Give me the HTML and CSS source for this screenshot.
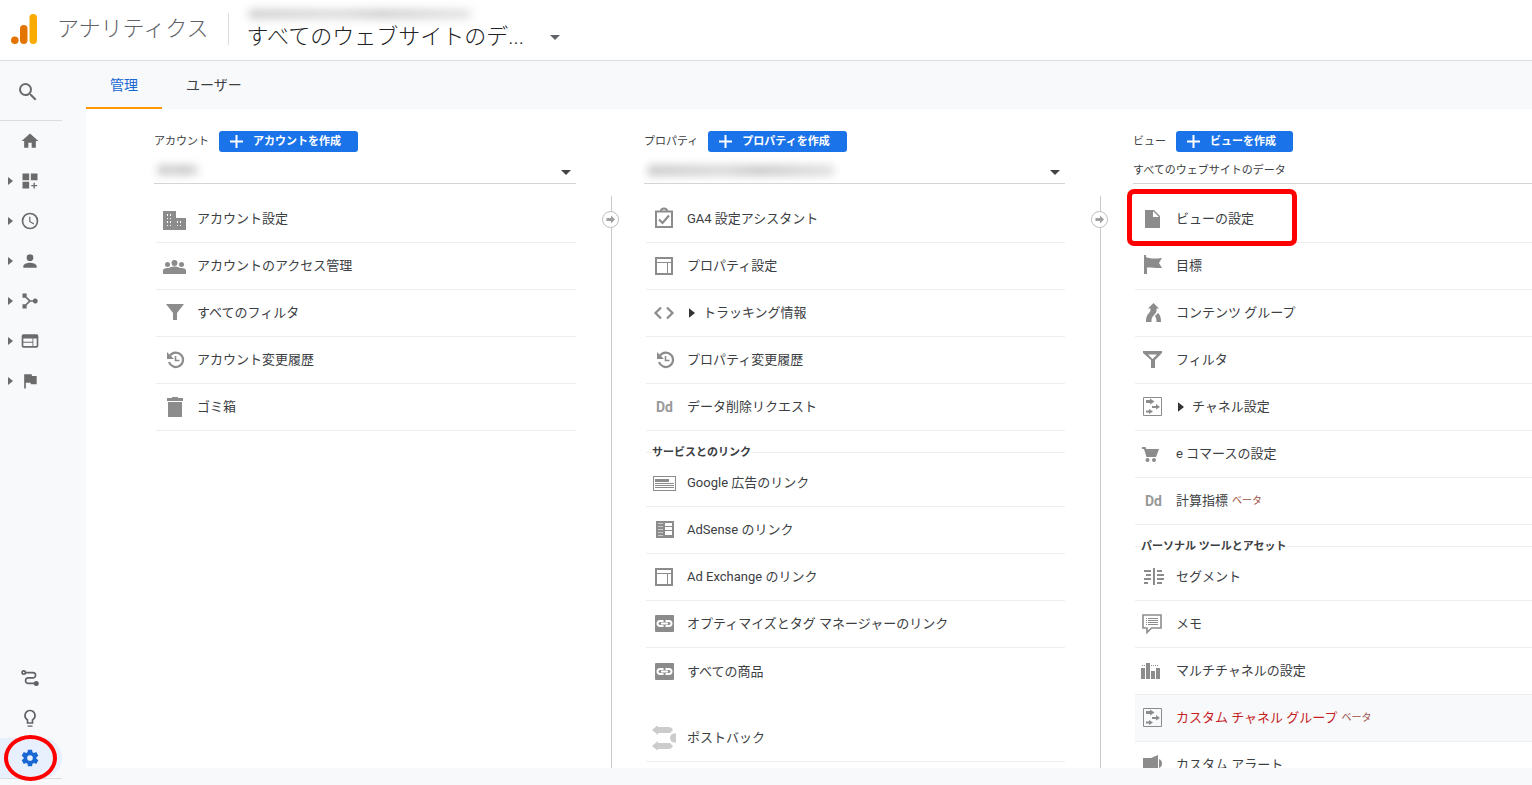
FILE: index.html
```html
<!DOCTYPE html>
<html lang="ja">
<head>
<meta charset="utf-8">
<title>アナリティクス</title>
<link rel="stylesheet" href="styles.css">
</head>
<body>
<svg class="sprite" aria-hidden="true">
  <symbol id="caret-r" viewBox="0 0 5 8"><path d="M0 0l5 4-5 4z"/></symbol>
  <symbol id="caret-d" viewBox="0 0 10 5"><path d="M0 0h10L5 5z"/></symbol>
  <symbol id="plus" viewBox="0 0 13 13"><path d="M5.500 0h2v5.500h5.500v2H7.500V13h-2V7.500H0v-2h5.500z"/></symbol>
  <symbol id="search" viewBox="0 0 24 24"><path d="M15.500 14h-.79l-.28-.27A6.470 6.470 0 0 0 16 9.500 6.500 6.500 0 1 0 9.500 16c1.610 0 3.090-.59 4.230-1.570l.27.28v.79l5 4.990L20.490 19zm-6 0a4.500 4.500 0 1 1 0-9 4.500 4.500 0 0 1 0 9z"/></symbol>
  <symbol id="home" viewBox="0 0 24 24"><path d="M10 20v-6h4v6h5v-8h3L12 3 2 12h3v8z"/></symbol>
  <symbol id="dash" viewBox="0 0 24 24"><path d="M3 3h8v8H3zM13 3h8v8h-8zM3 13h8v8H3zM16.200 14h1.600v2.700h2.700v1.600h-2.700V21h-1.600v-2.700h-2.700v-1.600h2.700z"/></symbol>
  <symbol id="clock" viewBox="0 0 24 24"><path d="M12 2a10 10 0 1 0 0 20 10 10 0 0 0 0-20zm0 18a8 8 0 1 1 0-16 8 8 0 0 1 0 16zm.5-13H11v6l5.250 3.150.75-1.230-4.500-2.670z"/></symbol>
  <symbol id="person" viewBox="0 0 24 24"><path d="M12 12a4 4 0 1 0 0-8 4 4 0 0 0 0 8zm0 2c-2.670 0-8 1.340-8 4v2h16v-2c0-2.660-5.330-4-8-4z"/></symbol>
  <symbol id="flow" viewBox="0 0 24 24"><path d="M3 3h5v4l4.500 4h3a3 3 0 1 1 0 2h-3L8 17v4H3v-5h3.500l4-4-4-4H3z"/></symbol>
  <symbol id="web" viewBox="0 0 24 24"><path d="M20 4H4a2 2 0 0 0-2 2v12a2 2 0 0 0 2 2h16a2 2 0 0 0 2-2V6a2 2 0 0 0-2-2zm-5 14H4v-4h11zm0-5H4V9h11zm5 5h-4V9h4z"/></symbol>
  <symbol id="flag" viewBox="0 0 24 24"><path d="M14.400 6 14 4H5v17h2v-7h5.600l.4 2h7V6z"/></symbol>
  <symbol id="route" viewBox="0 0 24 24"><g fill="none" stroke="currentColor" stroke-width="2"><circle cx="4.500" cy="5.500" r="2"/><path d="M6.500 5.500h9a3.200 3.200 0 0 1 0 6.400H10a3.200 3.200 0 0 0 0 6.600h8"/></g><circle cx="19.500" cy="18.500" r="3"/></symbol>
  <symbol id="bulb" viewBox="0 0 24 24"><path d="M9 21h6v1.500H9zM12 2a7 7 0 0 0-4 12.740V19h8v-4.260A7 7 0 0 0 12 2zm2.850 11.100-.85.6V17h-4v-3.300l-.85-.6a5 5 0 1 1 5.700 0z"/></symbol>
  <symbol id="gear" viewBox="0 0 24 24"><path fill-rule="evenodd" d="M9.500 2h5l.5 3 1.800 1 2.700-1.100 2.500 4.300-2.300 1.900v1.800l2.300 1.900-2.500 4.300-2.700-1.100-1.800 1-.5 3h-5L9 19l-1.800-1-2.700 1.100L2 14.800l2.300-1.900v-1.800L2 9.200l2.500-4.300L7.200 6 9 5zM12 8.600a3.400 3.400 0 1 0 0 6.800 3.400 3.400 0 0 0 0-6.800z"/></symbol>

  <symbol id="building" viewBox="0 0 24 24"><path fill-rule="evenodd" d="M1 4h13v7h10v12H1zM5 7v2h1V7zm3 0v2h1V7zM5 11v1h1v-1zm3 0v1h1v-1zM5 14v2h1v-2zm3 0v2h1v-2zM5 18v1h1v-1zm3 0v1h1v-1zM15 14v2h1v-2zm3 0v2h1v-2zM15 18v1h1v-1zm3 0v1h1v-1z"/></symbol>
  <symbol id="people" viewBox="0 0 24 24"><circle cx="12.500" cy="9" r="3"/><circle cx="5.500" cy="10.500" r="2.500"/><circle cx="19.500" cy="10.500" r="2.500"/><path d="M1 20v-3.500c0-2 3-2.500 6-2.500 1.500-1 3.500-1.500 5.500-1.500s4 .5 5.500 1.500c3 0 6 .5 6 2.500V20z"/></symbol>
  <symbol id="funnel" viewBox="0 0 24 24"><path d="M4 3h18l-7 9v7h-4v-7z"/></symbol>
  <symbol id="history" viewBox="0 0 24 24"><g fill="none" stroke="currentColor" stroke-width="2.200"><path d="M8 7.600A7.200 7.200 0 1 1 7 14"/><path d="M13.500 8v4.500h4" stroke-width="1.600"/></g><path d="M5 4v7h7L9.500 8.500z"/></symbol>
  <symbol id="trash" viewBox="0 0 24 24"><path d="M5 3h5V2h6v1h5v3H5zM6 7h14v15H6z"/></symbol>
  <symbol id="assign" viewBox="0 0 24 24"><g fill="none" stroke="currentColor" stroke-width="2"><path d="M4 4.500h16V20H4z"/><path d="M7 12.500l3.500 3.500L17 8.500" stroke-width="2.200"/><path d="M9 4a3 2.500 0 0 1 6 0"/></g></symbol>
  <symbol id="layout" viewBox="0 0 24 24"><path fill-rule="evenodd" d="M3 3h18v18H3zm2 2v3h14V5zm0 4v10h10V9zm11 0v10h3V9z"/></symbol>
  <symbol id="code" viewBox="0 0 24 24"><path d="M9 6.500 3.500 12 9 17.500M15 6.500l5.500 5.500-5.500 5.500" fill="none" stroke="currentColor" stroke-width="2.200"/></symbol>
  <symbol id="adlink" viewBox="0 0 24 24"><path fill-rule="evenodd" d="M1 5h23v15H1zm1 1v13h21V6z"/><path d="M3 8h14v3H3zM3 12h19v1H3zM3 14h19v1H3zM3 16h19v1H3z"/></symbol>
  <symbol id="adsense" viewBox="0 0 24 24"><path fill-rule="evenodd" d="M4 3h18v17H4zm9 2v3h7V5zm0 4v3h7V9zm0 4v4h7v-4z"/><path d="M6 5h5v1H6zM6 8h5v1H6zM6 11h5v1H6zM6 14h5v1H6zM6 17h5v1H6z" fill="#ccc"/></symbol>
  <symbol id="link" viewBox="0 0 24 24"><rect x="3" y="3" width="19" height="17" rx="1"/><g fill="none" stroke="#fff" stroke-width="2"><path d="M11.500 9H8a2.500 2.500 0 0 0 0 5h3.500M13.500 9H17a2.500 2.500 0 0 1 0 5h-3.500M9 11.500h7"/></g></symbol>
  <symbol id="postback" viewBox="0 0 24 24"><g fill="#ccc"><path d="M0 4l6-5v2h10c3 0 4 1 5 3l-3 3H6v2zM0 20l6 5v-2h10c3 0 4-1 5-3l-3-3H6v-2z"/><path d="M25 7.500h-2.500a4.500 4.500 0 0 0 0 9H25z"/></g></symbol>
  <symbol id="doc" viewBox="0 0 24 24"><path fill-rule="evenodd" d="M4 3h9l6 6v12H4zm8 1v6h6z"/></symbol>
  <symbol id="pennant" viewBox="0 0 24 24"><path d="M3 1h2v2c3 1.500 7 2 16 1l-3 5 3 5c-6 .5-11-1-15-.5V20H3z"/></symbol>
  <symbol id="merge" viewBox="0 0 24 24"><path d="M12.500 2 18 7.500h-2.500c.5 2.500-.5 4.500-2 6-2.500 2.500-3 3.500-3 7.500H5c0-5 1-7 3-9 1.500-1.500 1.500-2.500 1.500-4.500H7zM14 15l3-3c2.500 2 3 5 3 9h-4.500c0-3-.5-4.500-1.500-6z"/></symbol>
  <symbol id="filter" viewBox="0 0 24 24"><path fill-rule="evenodd" d="M2 3h19v2l-7 7v8h-4v-8L2 5zm5 3.500 4.500 4.500L16 6.500z"/></symbol>
  <symbol id="channel" viewBox="0 0 24 24"><path d="M2.500 2.500h18v18h-18z" fill="none" stroke="currentColor"/><path d="M5 5h4V3.500l4.500 3L9 9.500V8H5zM11 11h4V9l4 3-4 2.500V13h-4zM5 15.500h3V14l4 2.500L8 19v-1.500H5z"/></symbol>
  <symbol id="cart" viewBox="0 0 24 24"><path d="M1 5h3.500l.8 2H18l-3 8H5.500L3 7H1z"/><circle cx="6.500" cy="18" r="2"/><circle cx="13" cy="18" r="2"/></symbol>
  <symbol id="segment" viewBox="0 0 24 24"><path d="M12 3h2v17h-2zM3 5h7v2H3zM5 9h5v2H5zM3 13h7v2H3zM3 17h4v2H3zM16 5h5v2h-5zM16 9h7v2h-7zM16 13h7v2h-7zM16 17h5v2h-5z"/></symbol>
  <symbol id="memo" viewBox="0 0 24 24"><path d="M2 3h18v13h-9.500L6 20.500V16H2z" fill="none" stroke="currentColor" stroke-width="1.600"/><path d="M5 6h1v1H5zM7 6h10v1H7zM5 8h1v1H5zM7 8h10v1H7zM5 10h1v1H5zM7 10h10v1H7zM5 12h1v1H5zM7 12h10v1H7z"/></symbol>
  <symbol id="bars" viewBox="0 0 24 24"><path d="M0 9h4v11H0zM5 4h4v16H5zM10 12h4v8h-4zM15 9h4v11h-4zM1 6h1v1H1zM3 6h1v1H3zM10 6h1v1h-1zM12 6h1v1h-1zM14 6h1v1h-1zM16 6h1v1h-1z"/></symbol>
  <symbol id="horn" viewBox="0 0 24 24"><path d="M2 5h8l7-3v18l-7-4v4H5v-4H2zM18 6c4 1 4 8 0 9z"/></symbol>
</svg>

<header class="topbar">
  <svg class="logo" viewBox="0 0 27 30" aria-hidden="true"><rect x="18.500" width="7.500" height="30" rx="3.700" fill="#f9ab00"/><rect x="9" y="11" width="7.500" height="19" rx="3.700" fill="#e37400"/><circle cx="3.800" cy="26.200" r="3.800" fill="#e37400"/></svg>
  <h1 class="product">アナリティクス</h1>
  <button class="view-picker" aria-label="ビューを切り替え">
    <span class="smudge smudge-top"></span>
    <span class="view-name">すべてのウェブサイトのデ...</span>
    <svg class="caret-down"><use href="#caret-d"/></svg>
  </button>
</header>

<div class="shell">
  <nav class="rail" aria-label="メイン">
    <button class="rail-search" aria-label="検索"><svg class="ico-lg"><use href="#search"/></svg></button>
    <a class="rail-item" href="#" aria-label="ホーム"><span class="tri"></span><svg class="ico"><use href="#home"/></svg></a>
    <a class="rail-item" href="#" aria-label="カスタム"><svg class="tri"><use href="#caret-r"/></svg><svg class="ico"><use href="#dash"/></svg></a>
    <a class="rail-item" href="#" aria-label="リアルタイム"><svg class="tri"><use href="#caret-r"/></svg><svg class="ico"><use href="#clock"/></svg></a>
    <a class="rail-item" href="#" aria-label="ユーザー"><svg class="tri"><use href="#caret-r"/></svg><svg class="ico"><use href="#person"/></svg></a>
    <a class="rail-item" href="#" aria-label="集客"><svg class="tri"><use href="#caret-r"/></svg><svg class="ico"><use href="#flow"/></svg></a>
    <a class="rail-item" href="#" aria-label="行動"><svg class="tri"><use href="#caret-r"/></svg><svg class="ico"><use href="#web"/></svg></a>
    <a class="rail-item" href="#" aria-label="コンバージョン"><svg class="tri"><use href="#caret-r"/></svg><svg class="ico"><use href="#flag"/></svg></a>
    <div class="rail-bottom">
      <a class="rail-item" href="#" aria-label="アトリビューション"><span class="tri"></span><svg class="ico"><use href="#route"/></svg></a>
      <a class="rail-item" href="#" aria-label="発見"><span class="tri"></span><svg class="ico"><use href="#bulb"/></svg></a>
      <a class="rail-item active" href="#" aria-label="管理"><span class="tri"></span><svg class="ico"><use href="#gear"/></svg><span class="ring"></span></a>
    </div>
  </nav>

  <main class="main">
    <div class="tabs" role="tablist">
      <button class="tab selected" role="tab" aria-selected="true">管理</button>
      <button class="tab" role="tab" aria-selected="false">ユーザー</button>
    </div>

    <div class="panel">
      <section class="col">
        <div class="col-head"><label for="account">アカウント</label><button class="create"><svg class="plus"><use href="#plus"/></svg>アカウントを作成</button></div>
        <div class="picker"><select id="account"><option></option></select><span class="smudge smudge-account"></span><svg class="caret-down"><use href="#caret-d"/></svg></div>
        <div class="list">
          <a class="row" href="#"><svg class="glyph"><use href="#building"/></svg>アカウント設定</a>
          <a class="row" href="#"><svg class="glyph"><use href="#people"/></svg>アカウントのアクセス管理</a>
          <a class="row" href="#"><svg class="glyph"><use href="#funnel"/></svg>すべてのフィルタ</a>
          <a class="row" href="#"><svg class="glyph"><use href="#history"/></svg>アカウント変更履歴</a>
          <a class="row" href="#"><svg class="glyph"><use href="#trash"/></svg>ゴミ箱</a>
        </div>
      </section>

      <div class="divider"><button class="move" aria-label="列を折りたたむ"><svg viewBox="0 0 17 17"><circle cx="8.500" cy="8.500" r="8" fill="#fff" stroke="#bdbdbd"/><path d="M4.500 7H9V4.500l4 4-4 4V10H4.500z" fill="#9e9e9e"/></svg></button></div>

      <section class="col">
        <div class="col-head"><label for="property">プロパティ</label><button class="create"><svg class="plus"><use href="#plus"/></svg>プロパティを作成</button></div>
        <div class="picker"><select id="property"><option></option></select><span class="smudge smudge-property"></span><svg class="caret-down"><use href="#caret-d"/></svg></div>
        <div class="list">
          <a class="row" href="#"><svg class="glyph"><use href="#assign"/></svg>GA4 設定アシスタント</a>
          <a class="row" href="#"><svg class="glyph"><use href="#layout"/></svg>プロパティ設定</a>
          <a class="row" href="#"><svg class="glyph"><use href="#code"/></svg><svg class="expand"><use href="#caret-r"/></svg>トラッキング情報</a>
          <a class="row" href="#"><svg class="glyph"><use href="#history"/></svg>プロパティ変更履歴</a>
          <a class="row" href="#"><span class="glyph dd">Dd</span>データ削除リクエスト</a>
          <h2 class="group"><span>サービスとのリンク</span></h2>
          <a class="row" href="#"><svg class="glyph"><use href="#adlink"/></svg>Google 広告のリンク</a>
          <a class="row" href="#"><svg class="glyph"><use href="#adsense"/></svg>AdSense のリンク</a>
          <a class="row" href="#"><svg class="glyph"><use href="#layout"/></svg>Ad Exchange のリンク</a>
          <a class="row" href="#"><svg class="glyph"><use href="#link"/></svg>オプティマイズとタグ マネージャーのリンク</a>
          <a class="row last" href="#"><svg class="glyph"><use href="#link"/></svg>すべての商品</a>
          <a class="row" href="#"><svg class="glyph"><use href="#postback"/></svg>ポストバック</a>
        </div>
      </section>

      <div class="divider"><button class="move" aria-label="列を折りたたむ"><svg viewBox="0 0 17 17"><circle cx="8.500" cy="8.500" r="8" fill="#fff" stroke="#bdbdbd"/><path d="M4.500 7H9V4.500l4 4-4 4V10H4.500z" fill="#9e9e9e"/></svg></button></div>

      <section class="col">
        <div class="col-head"><label for="view">ビュー</label><button class="create"><svg class="plus"><use href="#plus"/></svg>ビューを作成</button></div>
        <div class="picker"><select id="view"><option>すべてのウェブサイトのデータ</option></select></div>
        <div class="list">
          <a class="row" href="#"><svg class="glyph"><use href="#doc"/></svg>ビューの設定<span class="frame"></span></a>
          <a class="row" href="#"><svg class="glyph"><use href="#pennant"/></svg>目標</a>
          <a class="row" href="#"><svg class="glyph"><use href="#merge"/></svg>コンテンツ グループ</a>
          <a class="row" href="#"><svg class="glyph"><use href="#filter"/></svg>フィルタ</a>
          <a class="row" href="#"><svg class="glyph"><use href="#channel"/></svg><svg class="expand"><use href="#caret-r"/></svg>チャネル設定</a>
          <a class="row" href="#"><svg class="glyph"><use href="#cart"/></svg>e コマースの設定</a>
          <a class="row" href="#"><span class="glyph dd">Dd</span>計算指標<small class="beta">ベータ</small></a>
          <h2 class="group"><span>パーソナル ツールとアセット</span></h2>
          <a class="row" href="#"><svg class="glyph"><use href="#segment"/></svg>セグメント</a>
          <a class="row" href="#"><svg class="glyph"><use href="#memo"/></svg>メモ</a>
          <a class="row" href="#"><svg class="glyph"><use href="#bars"/></svg>マルチチャネルの設定</a>
          <a class="row hot" href="#"><svg class="glyph"><use href="#channel"/></svg>カスタム チャネル グループ<small class="beta">ベータ</small></a>
          <a class="row" href="#"><svg class="glyph"><use href="#horn"/></svg>カスタム アラート</a>
        </div>
      </section>
    </div>
  </main>
</div>
</body>
</html>
```

FILE: styles.css
```css
* { box-sizing: border-box; }
body {
  margin: 0;
  height: 100vh;
  display: flex;
  flex-direction: column;
  overflow: hidden;
  background: #f8f9fb;
  color: #3c4043;
  font: 13px/20px Roboto, "Noto Sans CJK JP", sans-serif;
}
button, select {
  font: inherit;
  color: inherit;
  background: none;
  border: 0;
  padding: 0;
  margin: 0;
}
a { color: inherit; text-decoration: none; }
svg { display: block; fill: currentColor; flex: none; overflow: visible; }
.sprite { position: absolute; width: 0; height: 0; overflow: hidden; }

.topbar {
  display: flex;
  align-items: center;
  flex: none;
  height: 61px;
  padding: 0 11px 2px;
  background: #fff;
  border-bottom: 1px solid #dadce0;
}
.logo { width: 27px; height: 30px; }
.product {
  margin: 0 19px 0 19px;
  font-size: 22px;
  line-height: 32px;
  font-weight: 300;
  color: #5f6368;
}
.view-picker {
  display: grid;
  grid-template-columns: auto auto;
  align-items: center;
  column-gap: 26px;
  height: 32px;
  padding-left: 18px;
  border-left: 1px solid #dadce0;
  position: relative;
}
.view-name {
  padding-top: 8px;
  font-size: 22px;
  line-height: 32px;
  font-weight: 300;
  color: #202124;
}
.view-picker .caret-down { margin-top: 8px; }
.caret-down { width: 10px; height: 5px; color: #5f6368; }

.smudge {
  position: absolute;
  background: linear-gradient(90deg, #c4c4c4, #d4d4d4 40%, #c4c4c4 60%, #ddd);
  filter: blur(4px);
}
.smudge-top { left: 20px; top: -4px; width: 222px; height: 10px; opacity: .8; }
.smudge-account { left: 4px; top: 13px; width: 40px; height: 10px; }
.smudge-property { left: 4px; top: 13px; width: 186px; height: 11px; opacity: .9; }

.shell { display: flex; flex: 1; min-height: 0; }
.rail {
  display: flex;
  flex-direction: column;
  flex: none;
  width: 62px;
  margin-right: 24px;
  padding-bottom: 6px;
  color: #6b6b6b;
}
.rail-search {
  display: flex;
  align-items: center;
  flex: none;
  height: 60px;
  padding: 2px 0 0 16px;
  border-bottom: 1px solid #dadce0;
}
.ico-lg { width: 24px; height: 24px; }
.rail-item {
  position: relative;
  display: flex;
  align-items: center;
  flex: none;
  gap: 7px;
  height: 40px;
  padding-left: 8px;
}
.tri { width: 5px; height: 8px; }
.ico { width: 20px; height: 20px; }
.rail-bottom { margin-top: auto; border-bottom: 1px solid #dadce0; color: #5f6368; }
.active { background: #e8f0fe; color: #1967d2; border-radius: 0 20px 20px 0; }
.ring {
  position: absolute;
  left: 4px;
  top: -3px;
  width: 53px;
  height: 46px;
  border: 4px solid #f00;
  border-radius: 50%;
}

.main { display: flex; flex-direction: column; flex: 1; min-width: 0; padding-bottom: 17px; }
.tabs { display: flex; flex: none; height: 48px; }
.tab { padding: 2px 24px 0; font-size: 14px; border-bottom: 2px solid transparent; }
.tab.selected { color: #1967d2; border-color: #ff9800; }

.panel {
  display: grid;
  grid-template-columns: minmax(0, 422fr) 68px minmax(0, 421fr) 68px minmax(0, 399fr);
  flex: 1;
  min-height: 0;
  overflow: hidden;
  padding-left: 68px;
  background: #fff;
}
.col { padding-top: 22px; }
.col-head { display: flex; align-items: center; gap: 10px; height: 21px; font-size: 11px; }
.create {
  display: flex;
  align-items: center;
  gap: 10px;
  height: 21px;
  padding: 0 17px 0 11px;
  border-radius: 3px;
  background: #1a73e8;
  color: #fff;
  font-weight: 700;
}
.plus { width: 13px; height: 13px; }
.picker {
  position: relative;
  display: flex;
  align-items: center;
  height: 32px;
  padding-right: 5px;
  border-bottom: 1px solid #d5d5d5;
}
.picker select { appearance: none; flex: 1; min-width: 0; height: 31px; padding-top: 6px; font-size: 11px; }
.picker .caret-down { margin-top: 10px; color: #444; }

.divider { margin-top: 87px; padding-top: 15px; background: linear-gradient(#c8c8c8, #c8c8c8) 35px 0 / 1px 100% no-repeat; }
.move { display: block; margin: 0 auto; width: 17px; height: 17px; }

.list { padding: 12px 0 0 2px; }
.row {
  position: relative;
  display: flex;
  align-items: center;
  height: 47px;
  padding-left: 6px;
  border-bottom: 1px solid #eee;
  white-space: nowrap;
}
.glyph { width: 24px; height: 24px; margin-right: 11px; color: #8c8c8c; }
.dd { padding-left: 4px; font-size: 14px; line-height: 24px; font-weight: 700; color: #999; }
.expand { width: 6px; height: 10px; margin: 0 8px 0 2px; color: #333; }
.last { border-bottom: 0; margin-bottom: 20px; }
.hot { background: #f8f9fb; color: #c5221f; }
.beta { margin-left: 4px; font-size: 10px; color: #a0524a; }
.frame {
  position: absolute;
  left: -8px;
  top: -7px;
  width: 170px;
  height: 57px;
  border: 5px solid #f00;
  border-radius: 7px;
}
.group {
  height: 29px;
  margin: 0;
  padding: 14px 0 0 6px;
  font-size: 11px;
  line-height: 15px;
  font-weight: 700;
  background: linear-gradient(#eee, #eee) 0 21px / 100% 1px no-repeat;
}
.group span { background: #fff; }
```
